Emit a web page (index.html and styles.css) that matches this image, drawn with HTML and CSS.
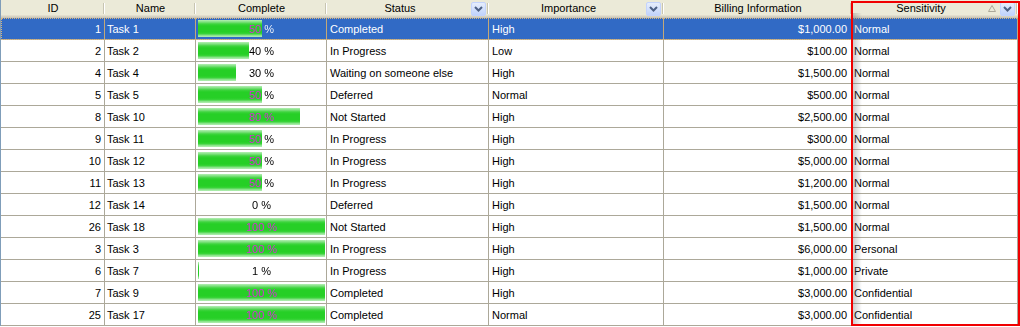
FILE: index.html
```html
<!DOCTYPE html>
<html lang="en">
<head>
    <meta charset="UTF-8">
    <title>Tasks</title>
    <link rel="stylesheet" href="styles.css">
</head>
<body>
    <div class="grid">
        <div class="head">
            <div class="hcell"><span class="htext">ID</span></div>
            <div class="hcell"><span class="htext">Name</span></div>
            <div class="hcell"><span class="htext">Complete</span></div>
            <div class="hcell"><span class="htext">Status</span><span class="drop"><svg width="9" height="6" viewBox="0 0 9 6"><polyline points="1,1 4.5,4.5 8,1" fill="none" stroke="#4d6185" stroke-width="2"/></svg></span></div>
            <div class="hcell"><span class="htext">Importance</span><span class="drop"><svg width="9" height="6" viewBox="0 0 9 6"><polyline points="1,1 4.5,4.5 8,1" fill="none" stroke="#4d6185" stroke-width="2"/></svg></span></div>
            <div class="hcell"><span class="htext">Billing Information</span></div>
            <div class="hcell"><span class="htext">Sensitivity</span><span class="sort"><svg width="8" height="7" viewBox="0 0 8 7"><polygon points="4,0.5 7.5,6.5 0.5,6.5" fill="none" stroke="#aca899" stroke-width="1"/></svg></span><span class="drop"><svg width="9" height="6" viewBox="0 0 9 6"><polyline points="1,1 4.5,4.5 8,1" fill="none" stroke="#4d6185" stroke-width="2"/></svg></span></div>
        </div>

        <div class="row sel">
            <div class="cell num">1</div><div class="cell">Task 1</div>
            <div class="cell pcell"><div class="progress" style="--p:50%"><div class="fill"></div><div class="label">50 %</div></div></div>
            <div class="cell txt">Completed</div><div class="cell txt">High</div><div class="cell money">$1,000.00</div><div class="cell">Normal</div>
        </div>
        <div class="row">
            <div class="cell num">2</div><div class="cell">Task 2</div>
            <div class="cell pcell"><div class="progress" style="--p:40%"><div class="fill"></div><div class="label">40 %</div></div></div>
            <div class="cell txt">In Progress</div><div class="cell txt">Low</div><div class="cell money">$100.00</div><div class="cell">Normal</div>
        </div>
        <div class="row">
            <div class="cell num">4</div><div class="cell">Task 4</div>
            <div class="cell pcell"><div class="progress" style="--p:30%"><div class="fill"></div><div class="label">30 %</div></div></div>
            <div class="cell txt">Waiting on someone else</div><div class="cell txt">High</div><div class="cell money">$1,500.00</div><div class="cell">Normal</div>
        </div>
        <div class="row">
            <div class="cell num">5</div><div class="cell">Task 5</div>
            <div class="cell pcell"><div class="progress" style="--p:50%"><div class="fill"></div><div class="label">50 %</div></div></div>
            <div class="cell txt">Deferred</div><div class="cell txt">Normal</div><div class="cell money">$500.00</div><div class="cell">Normal</div>
        </div>
        <div class="row">
            <div class="cell num">8</div><div class="cell">Task 10</div>
            <div class="cell pcell"><div class="progress" style="--p:80%"><div class="fill"></div><div class="label">80 %</div></div></div>
            <div class="cell txt">Not Started</div><div class="cell txt">High</div><div class="cell money">$2,500.00</div><div class="cell">Normal</div>
        </div>
        <div class="row">
            <div class="cell num">9</div><div class="cell">Task 11</div>
            <div class="cell pcell"><div class="progress" style="--p:50%"><div class="fill"></div><div class="label">50 %</div></div></div>
            <div class="cell txt">In Progress</div><div class="cell txt">High</div><div class="cell money">$300.00</div><div class="cell">Normal</div>
        </div>
        <div class="row">
            <div class="cell num">10</div><div class="cell">Task 12</div>
            <div class="cell pcell"><div class="progress" style="--p:50%"><div class="fill"></div><div class="label">50 %</div></div></div>
            <div class="cell txt">In Progress</div><div class="cell txt">High</div><div class="cell money">$5,000.00</div><div class="cell">Normal</div>
        </div>
        <div class="row">
            <div class="cell num">11</div><div class="cell">Task 13</div>
            <div class="cell pcell"><div class="progress" style="--p:50%"><div class="fill"></div><div class="label">50 %</div></div></div>
            <div class="cell txt">In Progress</div><div class="cell txt">High</div><div class="cell money">$1,200.00</div><div class="cell">Normal</div>
        </div>
        <div class="row">
            <div class="cell num">12</div><div class="cell">Task 14</div>
            <div class="cell pcell"><div class="progress" style="--p:0%"><div class="label">0 %</div></div></div>
            <div class="cell txt">Deferred</div><div class="cell txt">High</div><div class="cell money">$1,500.00</div><div class="cell">Normal</div>
        </div>
        <div class="row">
            <div class="cell num">26</div><div class="cell">Task 18</div>
            <div class="cell pcell"><div class="progress" style="--p:100%"><div class="fill"></div><div class="label">100 %</div></div></div>
            <div class="cell txt">Not Started</div><div class="cell txt">High</div><div class="cell money">$1,500.00</div><div class="cell">Normal</div>
        </div>
        <div class="row">
            <div class="cell num">3</div><div class="cell">Task 3</div>
            <div class="cell pcell"><div class="progress" style="--p:100%"><div class="fill"></div><div class="label">100 %</div></div></div>
            <div class="cell txt">In Progress</div><div class="cell txt">High</div><div class="cell money">$6,000.00</div><div class="cell">Personal</div>
        </div>
        <div class="row">
            <div class="cell num">6</div><div class="cell">Task 7</div>
            <div class="cell pcell"><div class="progress" style="--p:1%"><div class="fill"></div><div class="label">1 %</div></div></div>
            <div class="cell txt">In Progress</div><div class="cell txt">High</div><div class="cell money">$1,000.00</div><div class="cell">Private</div>
        </div>
        <div class="row">
            <div class="cell num">7</div><div class="cell">Task 9</div>
            <div class="cell pcell"><div class="progress" style="--p:100%"><div class="fill"></div><div class="label">100 %</div></div></div>
            <div class="cell txt">Completed</div><div class="cell txt">High</div><div class="cell money">$3,000.00</div><div class="cell">Confidential</div>
        </div>
        <div class="row">
            <div class="cell num">25</div><div class="cell">Task 17</div>
            <div class="cell pcell"><div class="progress" style="--p:100%"><div class="fill"></div><div class="label">100 %</div></div></div>
            <div class="cell txt">Completed</div><div class="cell txt">Normal</div><div class="cell money">$3,000.00</div><div class="cell">Confidential</div>
        </div>

        <!-- column being dragged -->
        <div class="drag-box"></div>
    </div>
</body>
</html>
```

FILE: styles.css
```css
body {
    margin: 0;
    background-color: white;
    font-family: "Liberation Sans", Arial, sans-serif;
    font-size: 11px;
    color: black;
    overflow: hidden;
}
.grid {
    position: relative;
    width: 1018px;
    border-left: 1px solid #7f9db9;
}
.head, .row {
    display: grid;
    grid-template-columns: 104px 91px 131px 162px 175px 188px 166px;
}
.head {
    height: 18px;
    background: linear-gradient(to bottom, #ebead8 0, #ebead8 15px, #e2decd 15px, #e2decd 16px, #d6d2c2 16px, #d6d2c2 17px, #cbc7b8 17px);
}
.hcell {
    display: flex;
    align-items: center;
    height: 16px;
    padding: 0 2px 0 2px;
    background: linear-gradient(#c7c5b2, #c7c5b2) no-repeat right 1px top 3px / 1px 11px,
                linear-gradient(#ffffff, #ffffff) no-repeat right 0 top 3px / 1px 11px;
}
.htext {
    flex: 1;
    text-align: center;
    white-space: nowrap;
}
.drop {
    display: flex;
    align-items: center;
    justify-content: center;
    width: 13px;
    height: 12px;
    margin-right: 1px;
    margin-top: 1px;
    border: 1px solid #c3d3fd;
    border-radius: 2px;
    background: linear-gradient(#e6eefc, #c1d3fb);
}
.sort {
    display: flex;
    align-items: center;
    width: 8px;
    height: 7px;
    margin-right: 4px;
}
.sort svg, .drop svg {
    display: block;
}
.row {
    height: 22px;
    box-sizing: border-box;
    border-bottom: 1px solid #aca899;
}
.cell {
    height: 20px;
    padding: 1px 2px 0 2px;
    line-height: 20px;
    border-right: 1px solid #aca899;
    white-space: nowrap;
    overflow: hidden;
}
.cell.num {
    text-align: right;
    padding-right: 3px;
}
.cell.txt {
    padding-left: 3px;
}
.cell.money {
    text-align: right;
    padding-right: 4px;
}
.row.sel {
    background-color: #316ac5;
    color: white;
    outline: 1px dotted #d8b47c;
    outline-offset: -1px;
}
.row.sel .cell {
    border-right-color: #c2a878;
}
.pcell {
    height: 19px;
    padding: 2px 1px 0 2px;
}
.progress {
    position: relative;
    width: 127px;
    height: 17px;
    --ink: #000000;
}
.row.sel .progress {
    --ink: #ffffff;
}
.fill {
    position: absolute;
    left: 0;
    top: 0;
    bottom: 0;
    width: var(--p);
    background: linear-gradient(to bottom, #b4efb4 0, #7fe07f 2px, #3dd43d 4px, #26cf26 6px, #26cf26 12px, #3dd43d 14px, #7fe07f 15px, #b4efb4 17px);
}
/* label is magenta over the bar, normal ink beside it */
.progress .label {
    position: relative;
    line-height: 18px;
    text-align: center;
    color: transparent;
    background: linear-gradient(to right, #dc28dc 0, #dc28dc var(--p), var(--ink) var(--p), var(--ink) 100%);
    -webkit-background-clip: text;
    background-clip: text;
}
.drag-box {
    position: absolute;
    left: 850px;
    top: 1px;
    width: 169px;
    height: 325px;
    box-sizing: border-box;
    border: 2px solid #f00000;
    background: linear-gradient(to right, rgba(110, 110, 110, 0.35), rgba(110, 110, 110, 0)) no-repeat 0 10px / 9px 100%;
}
```
